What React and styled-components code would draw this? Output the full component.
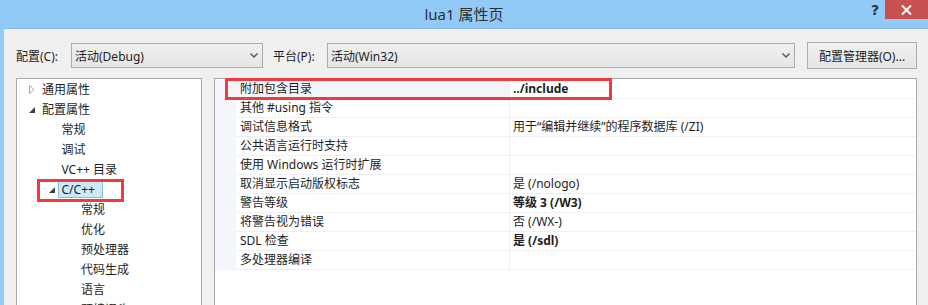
import React from 'react'
import styled, {createGlobalStyle} from 'styled-components'

const GlobalStyle = createGlobalStyle`
  html, body { margin: 0; padding: 0; background: #f0f0f0; }
  body {
    font-family: "Noto Sans", "Noto Sans CJK SC", sans-serif;
    font-size: 12px;
    color: #1e1e1e;
  }
  * { box-sizing: border-box; }
`

const treeItems = [
  {label: '通用属性', level: 0, toggle: 'closed'},
  {label: '配置属性', level: 0, toggle: 'open'},
  {label: '常规', level: 1},
  {label: '调试', level: 1},
  {label: 'VC++ 目录', level: 1},
  {label: 'C/C++', level: 1, toggle: 'open', selected: true},
  {label: '常规', level: 2},
  {label: '优化', level: 2},
  {label: '预处理器', level: 2},
  {label: '代码生成', level: 2},
  {label: '语言', level: 2},
  {label: '预编译头', level: 2}
]

const props = [
  {name: '附加包含目录', value: '../include', bold: true, active: true},
  {name: '其他 #using 指令', value: ''},
  {name: '调试信息格式', value: '用于“编辑并继续”的程序数据库 (/ZI)'},
  {name: '公共语言运行时支持', value: ''},
  {name: '使用 Windows 运行时扩展', value: ''},
  {name: '取消显示启动版权标志', value: '是 (/nologo)'},
  {name: '警告等级', value: '等级 3 (/W3)', bold: true},
  {name: '将警告视为错误', value: '否 (/WX-)'},
  {name: 'SDL 检查', value: '是 (/sdl)', bold: true},
  {name: '多处理器编译', value: ''}
]

const Chevron = () => (
  <svg width="8" height="5" viewBox="0 0 8 5">
    <path d="M0.5 0.5 L4 4 L7.5 0.5" fill="none" stroke="#555" strokeWidth="1.4"/>
  </svg>
)

const Toggle = ({type}) => {
  if (type === 'closed') {
    return (
      <svg width="6" height="9" viewBox="0 0 6 9">
        <path d="M0.5 0.5 L5 4.5 L0.5 8.5 Z" fill="#fff" stroke="#a6a6a6"/>
      </svg>
    )
  }
  if (type === 'open') {
    return (
      <svg width="6" height="6" viewBox="0 0 6 6">
        <path d="M6 0 L6 6 L0 6 Z" fill="#404040"/>
      </svg>
    )
  }
  return null
}

const App = () => {
  return (
    <Window>
      <GlobalStyle/>
      <TitleBar>
        <Title>lua1 属性页</Title>
        <Controls>
          <HelpButton>?</HelpButton>
          <CloseButton>
            <svg width="11" height="10" viewBox="0 0 11 10">
              <path d="M1 0.5 L10 9.5 M10 0.5 L1 9.5" stroke="#fff" strokeWidth="2"/>
            </svg>
          </CloseButton>
        </Controls>
      </TitleBar>

      <Body>
        <Toolbar>
          <Label width={55}>配置(C):</Label>
          <Select width={192}>
            <span>活动(Debug)</span>
            <Chevron/>
          </Select>
          <Label width={54} gap={10}>平台(P):</Label>
          <Select width={468}>
            <span>活动(Win32)</span>
            <Chevron/>
          </Select>
          <Button>配置管理器(O)...</Button>
        </Toolbar>

        <Main>
          <Tree>
            {treeItems.map((item, i) => (
              <TreeRow key={i} level={item.level}>
                <ToggleBox><Toggle type={item.toggle}/></ToggleBox>
                <TreeLabel selected={item.selected}>{item.label}</TreeLabel>
              </TreeRow>
            ))}
            <Mark style={{left: 20, top: 100, width: 87, height: 23}}/>
          </Tree>

          <Grid>
            <Rows>
              {props.map((p, i) => (
                <Row key={i}>
                  <Gutter/>
                  <NameCell active={p.active}>{p.name}</NameCell>
                  <ValueCell bold={p.bold}>{p.value}</ValueCell>
                </Row>
              ))}
            </Rows>
            <Mark style={{left: 10, top: -1, width: 387, height: 22}}/>
          </Grid>
        </Main>
      </Body>
    </Window>
  )
}

export default App

const Window = styled.div`
width:928px;
height:305px;
overflow:hidden;
background:#91c9f7;
padding-left:4px;
display:flex;
flex-direction:column;
`

const TitleBar = styled.div`
height:29px;
flex:none;
position:relative;
display:flex;
align-items:center;
justify-content:center;
border-bottom:1px solid #83b9e6;
padding-bottom:1px;
`

const Title = styled.div`
font-size:15px;
color:#2e2e2e;
margin-left:-4px;
`

const Controls = styled.div`
position:absolute;
top:0;
right:0;
display:flex;
align-items:flex-start;
`

const HelpButton = styled.div`
width:26px;
height:19px;
display:flex;
justify-content:center;
align-items:center;
font-weight:700;
font-size:14px;
color:#333;
font-family:"DejaVu Sans", sans-serif;
margin-right:-3px;
`

const CloseButton = styled.div`
width:43px;
height:19px;
background:#c75050;
display:flex;
justify-content:center;
align-items:center;
`

const Body = styled.div`
flex:1;
background:#f0f0f0;
padding:13px 11px 0 12px;
display:flex;
flex-direction:column;
`

const Toolbar = styled.div`
height:27px;
display:flex;
align-items:center;
flex:none;
`

const Label = styled.div`
width:${p => p.width}px;
margin-left:${p => p.gap || 0}px;
white-space:nowrap;
`

const Select = styled.div`
width:${p => p.width}px;
height:25px;
border:1px solid #acacac;
background:linear-gradient(#f0f0f0, #e5e5e5);
display:flex;
align-items:center;
justify-content:space-between;
padding:0 4px 0 3px;
`

const Button = styled.div`
width:110px;
height:27px;
margin-left:12px;
border:1px solid #adadad;
background:linear-gradient(#f0f0f0, #e5e5e5);
display:flex;
align-items:center;
justify-content:center;
white-space:nowrap;
`

const Main = styled.div`
display:flex;
gap:12px;
margin-top:9px;
height:260px;
flex:none;
`

const Tree = styled.div`
width:186px;
background:#fff;
border:1px solid #a9a9a9;
position:relative;
`

const TreeRow = styled.div`
height:20px;
display:flex;
align-items:center;
padding-left:${p => 11 + p.level * 19.5}px;
white-space:nowrap;
`

const ToggleBox = styled.div`
width:14px;
display:flex;
align-items:center;
padding-left:1px;
padding-top:1px;
`

const TreeLabel = styled.span`
line-height:15px;
${p => p.selected && `
  background:#cce8fb;
  border:1px solid #7dbfe6;
  margin-left:-4px;
  padding:0 7px 0 3px;
`}
`

const Mark = styled.div`
position:absolute;
border:3px solid #ef3b3f;
pointer-events:none;
`

const Grid = styled.div`
width:703px;
background:#fff;
border:1px solid #a9a9a9;
position:relative;
`

const Rows = styled.div`
display:flex;
flex-direction:column;
padding-top:1px;
`

const Row = styled.div`
display:grid;
grid-template-columns:21px 273px 1fr;
height:19px;
`

const Gutter = styled.div`
background:#f3f6fb;
`

const NameCell = styled.div`
border-bottom:1px solid #eef0f5;
padding-left:4px;
line-height:18px;
white-space:nowrap;
background:${p => p.active ? '#f2f5fa' : '#fff'};
`

const ValueCell = styled.div`
border-bottom:1px solid #eef0f5;
border-left:1px solid #eef0f5;
padding-left:3px;
line-height:18px;
white-space:nowrap;
font-weight:${p => p.bold ? 700 : 400};
`
